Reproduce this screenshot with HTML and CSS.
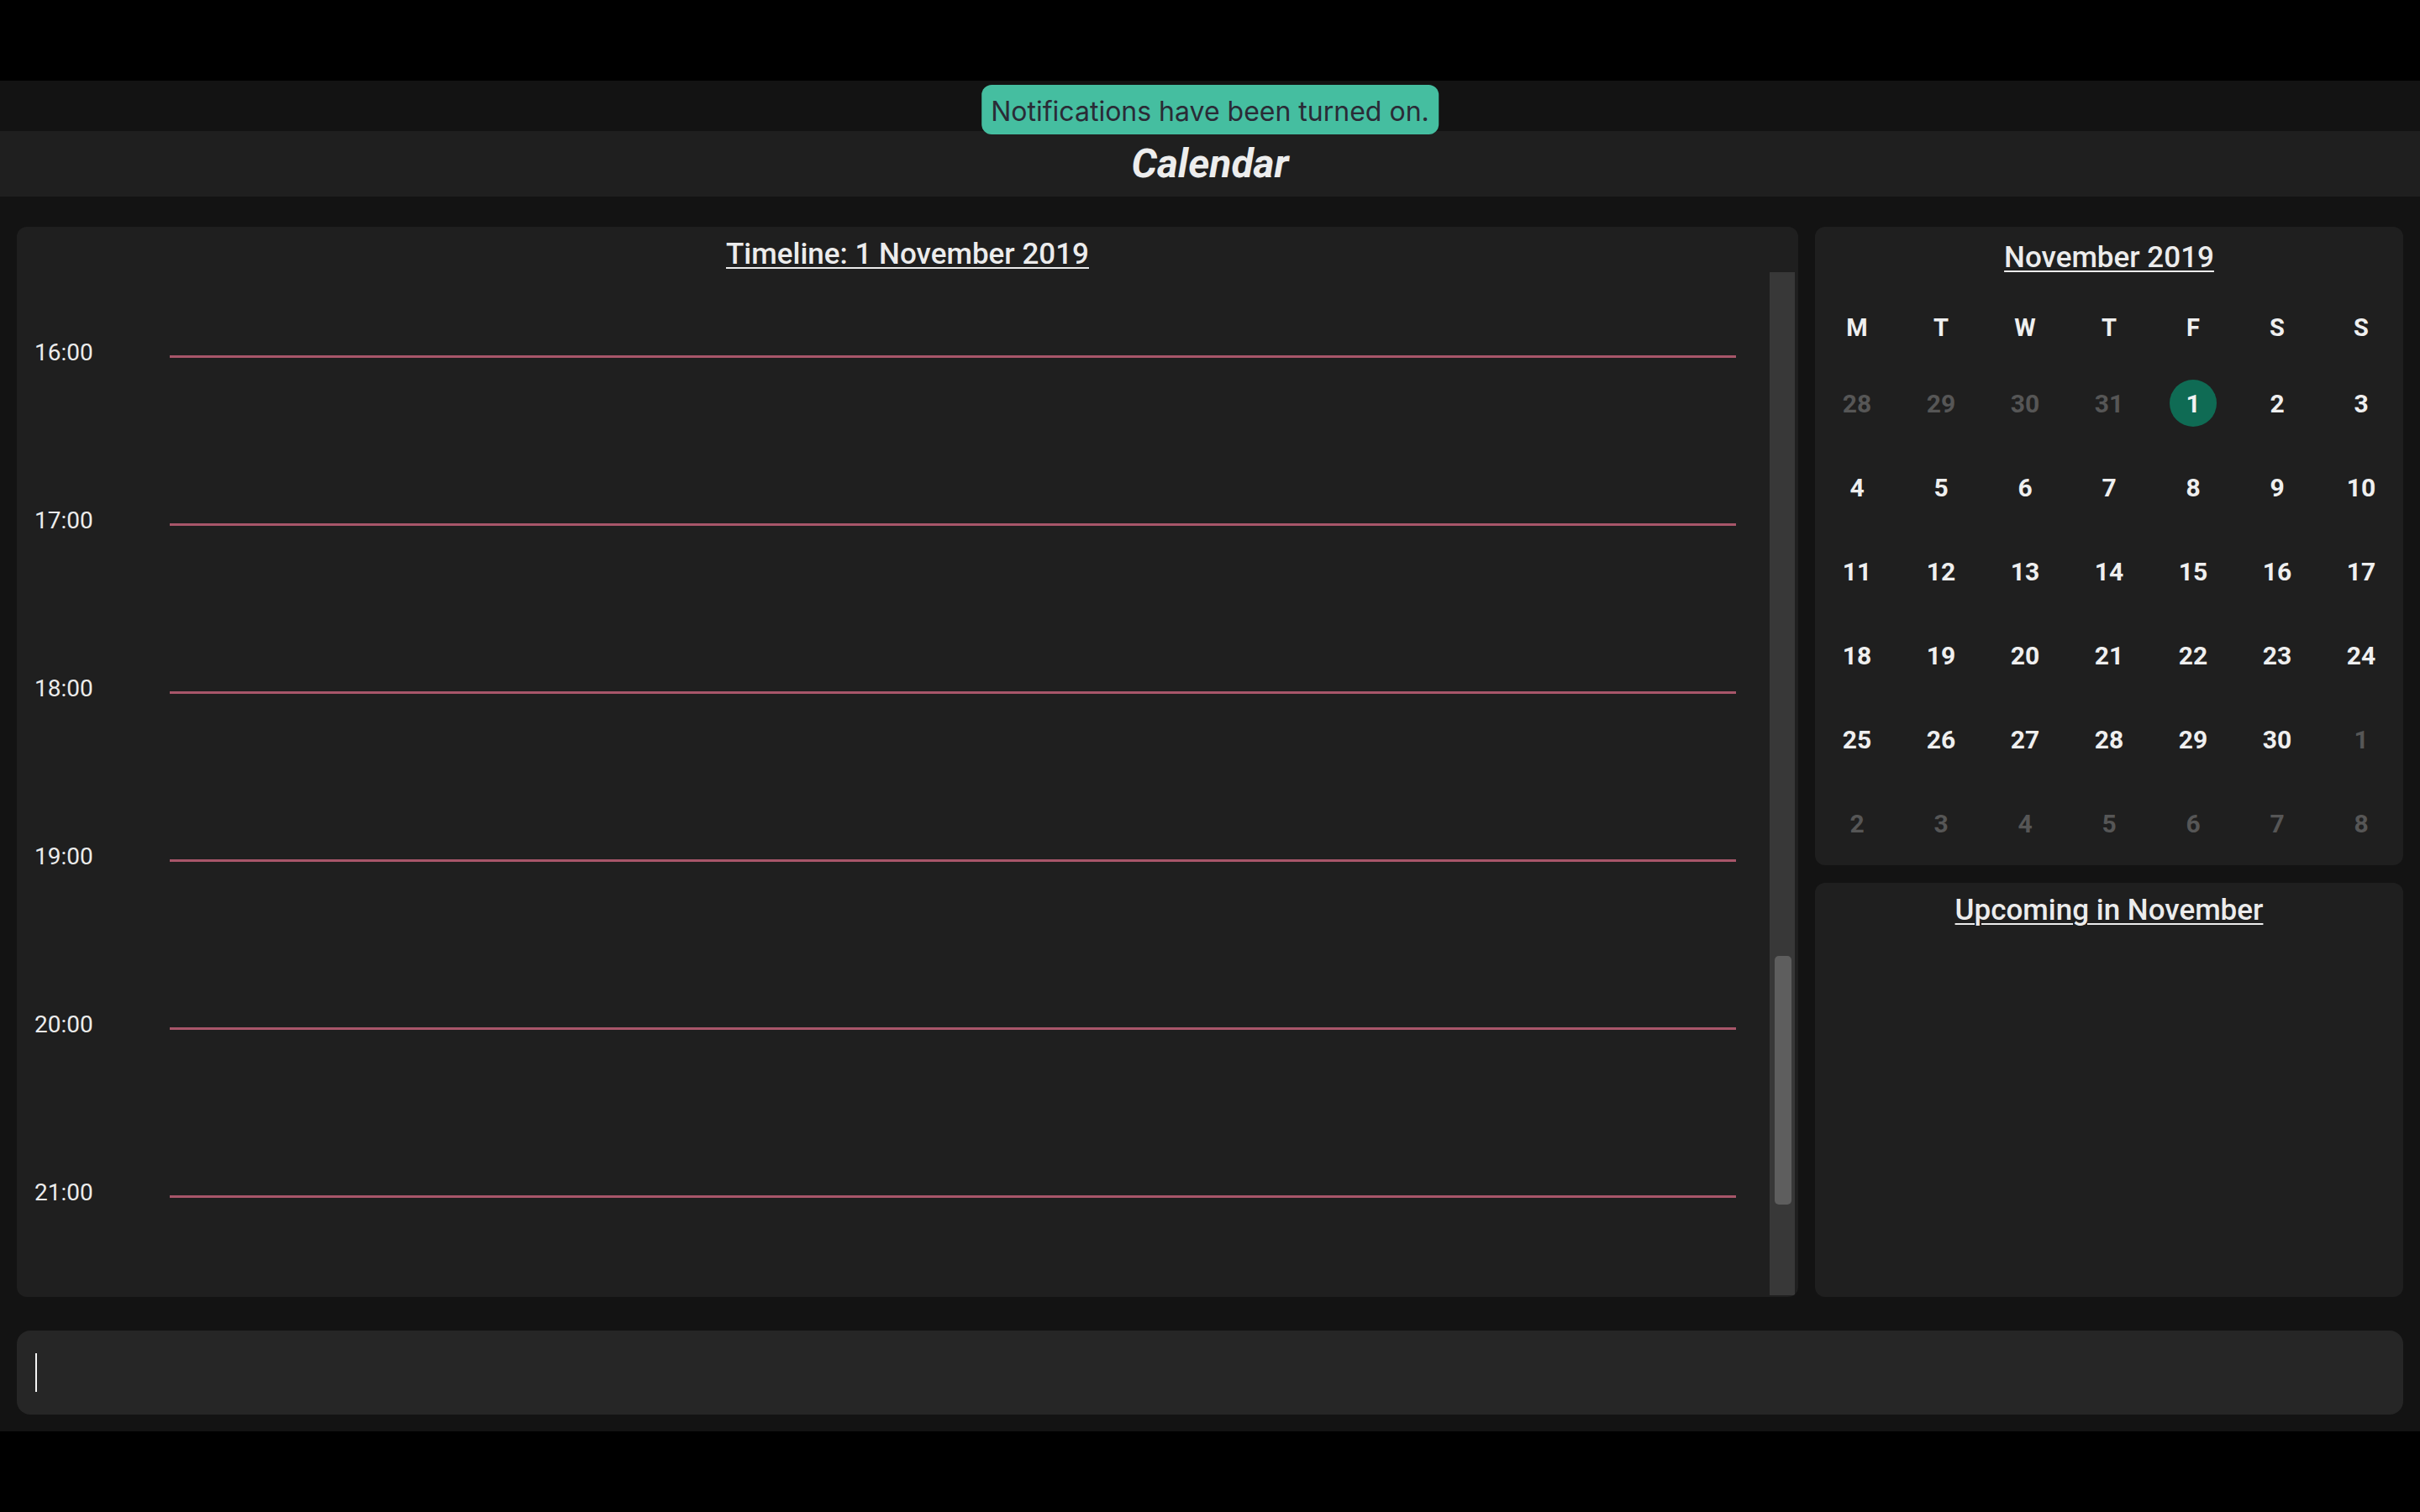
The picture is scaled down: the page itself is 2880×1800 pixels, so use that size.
FILE: index.html
```html
<!DOCTYPE html>
<html lang="en">
<head>
<meta charset="utf-8">
<title>Calendar</title>
<link rel="stylesheet" href="styles.css">
</head>
<body>
<div class="app">
  <div class="strip"></div>
  <div class="toast">Notifications have been turned on.</div>
  <header class="header"><h1 class="app-title">Calendar</h1></header>
  <main class="main">
    <section class="panel timeline">
      <h2 class="panel-title">Timeline: 1 November 2019</h2>
      <div class="timeline-body">
        <div class="hours">
          <div class="hour"><span class="hour-label">16:00</span><span class="hour-line"></span></div>
          <div class="hour"><span class="hour-label">17:00</span><span class="hour-line"></span></div>
          <div class="hour"><span class="hour-label">18:00</span><span class="hour-line"></span></div>
          <div class="hour"><span class="hour-label">19:00</span><span class="hour-line"></span></div>
          <div class="hour"><span class="hour-label">20:00</span><span class="hour-line"></span></div>
          <div class="hour"><span class="hour-label">21:00</span><span class="hour-line"></span></div>
        </div>
        <div class="scrollbar"><div class="thumb"></div></div>
      </div>
    </section>
    <div class="side">
      <section class="panel month">
        <h2 class="panel-title month-title">November 2019</h2>
        <div class="grid">
          <div class="dow">M</div><div class="dow">T</div><div class="dow">W</div><div class="dow">T</div><div class="dow">F</div><div class="dow">S</div><div class="dow">S</div>
          <div class="day other">28</div><div class="day other">29</div><div class="day other">30</div><div class="day other">31</div><div class="day"><span class="today">1</span></div><div class="day">2</div><div class="day">3</div>
          <div class="day">4</div><div class="day">5</div><div class="day">6</div><div class="day">7</div><div class="day">8</div><div class="day">9</div><div class="day">10</div>
          <div class="day">11</div><div class="day">12</div><div class="day">13</div><div class="day">14</div><div class="day">15</div><div class="day">16</div><div class="day">17</div>
          <div class="day">18</div><div class="day">19</div><div class="day">20</div><div class="day">21</div><div class="day">22</div><div class="day">23</div><div class="day">24</div>
          <div class="day">25</div><div class="day">26</div><div class="day">27</div><div class="day">28</div><div class="day">29</div><div class="day">30</div><div class="day other">1</div>
          <div class="day other">2</div><div class="day other">3</div><div class="day other">4</div><div class="day other">5</div><div class="day other">6</div><div class="day other">7</div><div class="day other">8</div>
        </div>
      </section>
      <section class="panel upcoming">
        <h2 class="panel-title">Upcoming in November</h2>
      </section>
    </div>
  </main>
  <div class="command"><span class="caret"></span></div>
</div>
</body>
</html>
```

FILE: styles.css
```css
html, body {
  margin: 0;
  padding: 0;
  background: #000;
}

body {
  width: 2880px;
  height: 1800px;
  overflow: hidden;
  font-family: Roboto, "Liberation Sans", sans-serif;
  color: #ececec;
}

.app {
  margin-top: 96px;
  height: 1608px;
  background: #131313;
  display: flex;
  flex-direction: column;
  position: relative;
}

.strip {
  height: 60px;
  flex: none;
}

.toast {
  position: absolute;
  top: 5px;
  left: 50%;
  transform: translateX(-50%);
  height: 59px;
  padding: 3px 11px 0;
  box-sizing: border-box;
  display: flex;
  align-items: center;
  background: #45bea0;
  color: #2a2b36;
  border-radius: 12px;
  font-family: Inter, "Noto Sans", sans-serif;
  font-size: 32px;
  white-space: nowrap;
  z-index: 2;
}

.header {
  height: 78px;
  flex: none;
  background: #1f1f1f;
  display: flex;
  align-items: center;
  justify-content: center;
}

.app-title {
  margin: 0;
  font-size: 48px;
  font-weight: 700;
  font-style: italic;
  color: #ededed;
  line-height: 1;
}

.main {
  flex: none;
  height: 1274px;
  padding: 36px 20px 0;
  display: flex;
  gap: 20px;
}

.panel {
  background: #1f1f1f;
  border-radius: 12px;
  display: flex;
  flex-direction: column;
}

.panel-title {
  margin: 0;
  padding-top: 10px;
  height: 44px;
  line-height: 46px;
  text-align: center;
  font-size: 35px;
  font-weight: 500;
  color: #ececec;
  text-decoration: underline;
  text-decoration-thickness: 2px;
  text-underline-offset: 4px;
  flex: none;
}

.timeline {
  width: 2120px;
  flex: none;
  overflow: hidden;
}

.timeline-body {
  flex: 1;
  display: flex;
  min-height: 0;
}

.hours {
  flex: 1;
  overflow: hidden;
}

.hour {
  height: 200px;
  display: flex;
  align-items: center;
}

.hour-label {
  width: 161px;
  padding-left: 21px;
  font-size: 28px;
  color: #ececec;
  margin-bottom: 9px;
  flex: none;
}

.hour-line {
  flex: 1;
  height: 3px;
  background: #a8566a;
  margin-right: 40px;
}

.scrollbar {
  width: 30px;
  margin-right: 4px;
  margin-bottom: 2px;
  background: #383838;
  flex: none;
}

.thumb {
  margin-top: 814px;
  margin-left: 6px;
  width: 20px;
  height: 296px;
  background: #5e5e5e;
  border-radius: 5px;
}

.side {
  width: 700px;
  flex: none;
  display: flex;
  flex-direction: column;
  gap: 21px;
}

.month-title {
  padding-top: 14px;
  height: 44px;
  margin-bottom: 22px;
}

.grid {
  display: grid;
  grid-template-columns: repeat(7, 100px);
  grid-template-rows: 80px repeat(6, 100px);
}

.dow, .day {
  display: flex;
  align-items: center;
  justify-content: center;
  font-weight: 700;
}

.dow {
  font-size: 29px;
  color: #efefef;
}

.day {
  font-size: 30px;
  color: #efefef;
}

.day.other {
  color: #565656;
}

.today {
  width: 56px;
  height: 56px;
  border-radius: 50%;
  background: #0f6b54;
  display: flex;
  align-items: center;
  justify-content: center;
  color: #f2f2f2;
}

.upcoming {
  flex: 1;
}

.command {
  margin: 40px 20px 20px;
  height: 100px;
  background: #262626;
  border-radius: 16px;
  display: flex;
  align-items: flex-start;
  padding-left: 22px;
  flex: none;
}

.caret {
  margin-top: 27px;
  width: 2px;
  height: 46px;
  background: #f4f4f4;
}
```
